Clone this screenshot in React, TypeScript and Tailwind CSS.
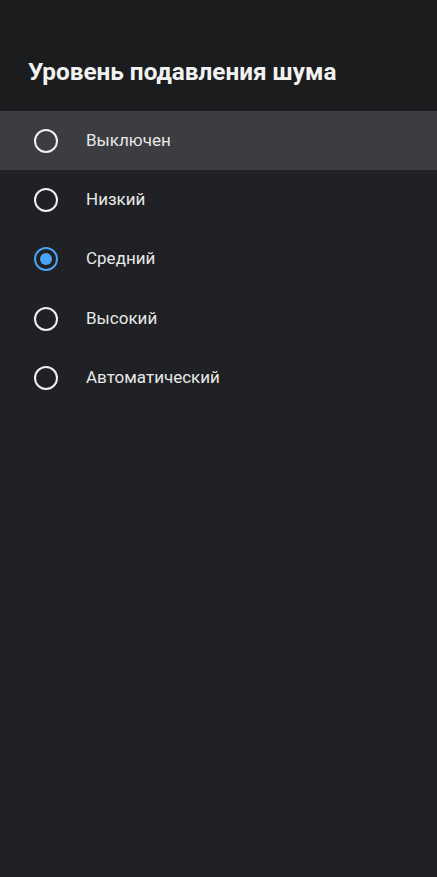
import React, { useState } from 'react';

const options = ['Выключен', 'Низкий', 'Средний', 'Высокий', 'Автоматический'];

const Radio = ({ checked }: { checked: boolean }) => (
  <span
    className={`flex h-[24px] w-[24px] shrink-0 items-center justify-center rounded-full border-2 ${
      checked ? 'border-[#4ba3f8]' : 'border-[#f1f1f1]'
    }`}
  >
    {checked && <span className="h-[12px] w-[12px] rounded-full bg-[#4ba3f8]" />}
  </span>
);

const App = () => {
  const [selected, setSelected] = useState(2);
  const focused = 0;

  return (
    <div className="flex h-[877px] w-full flex-col bg-[#202124] font-['Roboto',sans-serif]">
      <div className="flex h-[111px] items-end bg-[#1b1c1e] px-[28px] pb-[24px]">
        <h1 className="text-[24.3px] font-bold leading-[30px] text-[#f2f2f2]">Уровень подавления шума</h1>
      </div>
      <ul>
        {options.map((label, i) => (
          <li
            key={label}
            onClick={() => setSelected(i)}
            className={`flex h-[59.3px] cursor-pointer items-center gap-[28px] pl-[34px] ${
              i === focused ? 'bg-[#3c3d40]' : ''
            }`}
          >
            <Radio checked={i === selected} />
            <span className="text-[17px] text-[#e8e8e8]">{label}</span>
          </li>
        ))}
      </ul>
    </div>
  );
};

export default App;
